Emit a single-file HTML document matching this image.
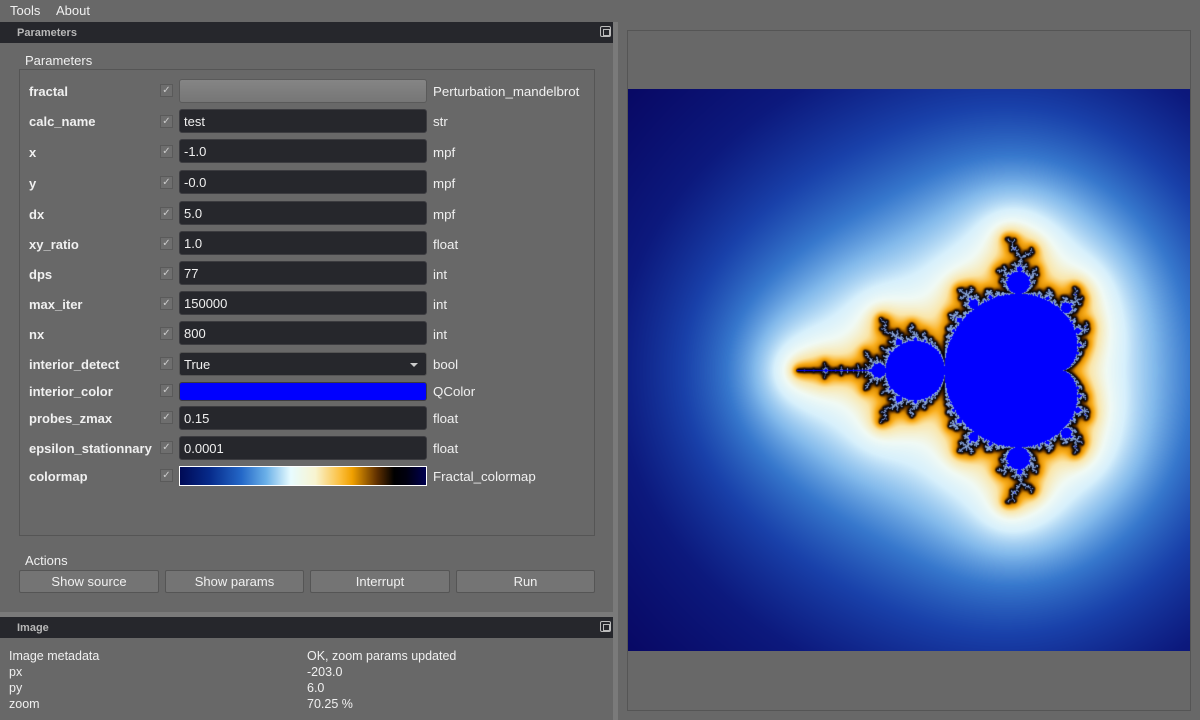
<!DOCTYPE html>
<html><head><meta charset="utf-8"><style>
*{box-sizing:border-box;margin:0;padding:0}
body{width:1200px;height:720px;background:#686868;font-family:"Liberation Sans","DejaVu Sans",sans-serif;font-size:13px;color:#f0f0f0;position:relative;overflow:hidden}
.a{position:absolute}
.menu span{position:absolute;top:3px;font-size:13px}
.dock{background:#26272c;height:21px;left:0;width:613px;color:#b8b8b8;font-weight:bold;font-size:11px;padding:5px 0 0 17px}
.fl{position:absolute;right:2px;top:4px;width:11px;height:11px;border:1px solid #bbb;border-radius:2px}
.fl:after{content:"";position:absolute;left:2px;top:2px;width:5px;height:5px;border:1px solid #bbb}
.lab{position:absolute;left:29px;font-weight:bold;font-size:13px}
.cb{position:absolute;left:160px;width:13px;height:13px;border:1px solid #5a5a5a;background:#6e6e6e;color:#ccc;font-size:10px;line-height:11px;text-align:center}
.fd{position:absolute;left:179px;width:248px;height:24px;background:#26272c;border:1px solid #3c3c40;border-radius:3px;padding:4px 0 0 4px;font-size:13px}
.ty{position:absolute;left:433px;font-size:13.3px}
.btn{position:absolute;top:570px;height:23px;background:#747474;border:1px solid #555;border-radius:2px;text-align:center;padding-top:3px;font-size:13px}
.md{position:absolute;font-size:12.5px}
</style></head><body>
<div class="menu"><span style="left:10px">Tools</span><span style="left:56px">About</span></div>
<div class="a dock" style="top:22px">Parameters<div class="fl"></div></div>
<div class="a" style="left:613px;top:22px;width:5px;height:698px;background:#7a7a7a"></div>
<div class="a" style="left:0;top:612px;width:613px;height:5px;background:#7a7a7a"></div>
<div class="a" style="left:25px;top:53px">Parameters</div>
<div class="a" style="left:19px;top:69px;width:576px;height:467px;border:1px solid #555"></div>

<div class="lab" style="top:84px">fractal</div><div class="cb" style="top:84px">✓</div>
<div class="fd" style="top:79px;background:linear-gradient(#858585,#767676);border-color:#5a5a5a"></div><div class="ty" style="top:84px">Perturbation_mandelbrot</div>

<div class="lab" style="top:114px">calc_name</div><div class="cb" style="top:115px">✓</div><div class="fd" style="top:109px">test</div><div class="ty" style="top:114px">str</div>
<div class="lab" style="top:145px">x</div><div class="cb" style="top:145px">✓</div><div class="fd" style="top:139px">-1.0</div><div class="ty" style="top:145px">mpf</div>
<div class="lab" style="top:176px">y</div><div class="cb" style="top:176px">✓</div><div class="fd" style="top:170px">-0.0</div><div class="ty" style="top:176px">mpf</div>
<div class="lab" style="top:207px">dx</div><div class="cb" style="top:207px">✓</div><div class="fd" style="top:201px">5.0</div><div class="ty" style="top:207px">mpf</div>
<div class="lab" style="top:237px">xy_ratio</div><div class="cb" style="top:237px">✓</div><div class="fd" style="top:231px">1.0</div><div class="ty" style="top:237px">float</div>
<div class="lab" style="top:267px">dps</div><div class="cb" style="top:267px">✓</div><div class="fd" style="top:261px">77</div><div class="ty" style="top:267px">int</div>
<div class="lab" style="top:297px">max_iter</div><div class="cb" style="top:297px">✓</div><div class="fd" style="top:291px">150000</div><div class="ty" style="top:297px">int</div>
<div class="lab" style="top:327px">nx</div><div class="cb" style="top:327px">✓</div><div class="fd" style="top:321px">800</div><div class="ty" style="top:327px">int</div>
<div class="lab" style="top:357px">interior_detect</div><div class="cb" style="top:357px">✓</div><div class="fd" style="top:352px;border-color:#555">True<span style="position:absolute;right:8px;top:10px;border-left:4px solid transparent;border-right:4px solid transparent;border-top:4px solid #ccc"></span></div><div class="ty" style="top:357px">bool</div>
<div class="lab" style="top:384px">interior_color</div><div class="cb" style="top:384px">✓</div><div class="fd" style="top:382px;height:19px;background:#0000ff"></div><div class="ty" style="top:384px">QColor</div>
<div class="lab" style="top:411px">probes_zmax</div><div class="cb" style="top:411px">✓</div><div class="fd" style="top:406px">0.15</div><div class="ty" style="top:411px">float</div>
<div class="lab" style="top:441px">epsilon_stationnary</div><div class="cb" style="top:441px">✓</div><div class="fd" style="top:436px">0.0001</div><div class="ty" style="top:441px">float</div>
<div class="lab" style="top:469px">colormap</div><div class="cb" style="top:469px">✓</div>
<div class="a" style="left:179px;top:466px;width:248px;height:20px;border:1px solid #fff;background:linear-gradient(90deg,#000a55 0%,#062a8a 12%,#2468c8 25%,#6ab0e8 35%,#e8fcff 45%,#f8f4d0 55%,#fcc040 65%,#f0a000 70%,#603000 80%,#000000 87%,#000010 92%,#000050 100%)"></div>
<div class="ty" style="top:469px">Fractal_colormap</div>

<div class="a" style="left:25px;top:553px">Actions</div>
<div class="btn" style="left:19px;width:140px">Show source</div>
<div class="btn" style="left:165px;width:139px">Show params</div>
<div class="btn" style="left:310px;width:140px">Interrupt</div>
<div class="btn" style="left:456px;width:139px">Run</div>

<div class="a dock" style="top:617px">Image<div class="fl"></div></div>
<div class="md" style="left:9px;top:649px">Image metadata</div><div class="md" style="left:307px;top:649px">OK, zoom params updated</div>
<div class="md" style="left:9px;top:665px">px</div><div class="md" style="left:307px;top:665px">-203.0</div>
<div class="md" style="left:9px;top:681px">py</div><div class="md" style="left:307px;top:681px">6.0</div>
<div class="md" style="left:9px;top:697px">zoom</div><div class="md" style="left:307px;top:697px">70.25 %</div>

<div class="a" style="left:627px;top:30px;width:564px;height:681px;border:1px solid #555"></div>
<div class="a" id="bg" style="left:628px;top:89px;width:562px;height:562px;background:radial-gradient(ellipse 320px 280px at 340px 270px,#0000ff 0,#0000ff 70px,#000 85px,#f0a000 100px,#fcf0c0 120px,#e8fcff 160px,#6ab0e8 230px,#2060c0 300px,#0a1470 450px)"></div>
<canvas id="c" width="562" height="562" class="a" style="left:628px;top:89px"></canvas>
<script>
(function(){
var cv=document.getElementById('c'),ctx=cv.getContext('2d'),W=562,H=562;
var img=ctx.createImageData(W,H),d=img.data;
var s=117.8,ox=1032.6-628,oy=370-89;
var stops=[[0,[140,170,220]],[0.5,[20,20,50]],[1.1,[0,0,0]],[1.7,[80,40,0]],[2.2,[220,140,0]],[2.7,[250,175,30]],[3.3,[250,230,170]],[4.0,[240,250,245]],[4.5,[215,240,252]],[5.1,[130,185,235]],[5.6,[55,120,205]],[6.1,[25,65,170]],[6.6,[12,25,125]],[7.1,[8,8,100]]];
function col(t){if(t<=stops[0][0])return stops[0][1];for(var i=1;i<stops.length;i++){if(t<=stops[i][0]){var a=stops[i-1],b=stops[i],f=(t-a[0])/(b[0]-a[0]);return [a[1][0]+(b[1][0]-a[1][0])*f,a[1][1]+(b[1][1]-a[1][1])*f,a[1][2]+(b[1][2]-a[1][2])*f];}}return stops[stops.length-1][1];}
for(var py=0;py<H;py++){var ci=(py-oy)/s;for(var px=0;px<W;px++){var cr=(px-ox)/s;var zr=0,zi=0,dr=0,di=0,n=0,M=600,r2=0;
for(;n<M;n++){var ndr=2*(zr*dr-zi*di)+1,ndi=2*(zr*di+zi*dr);dr=ndr;di=ndi;var t=zr*zr-zi*zi+cr;zi=2*zr*zi+ci;zr=t;r2=zr*zr+zi*zi;if(r2>1e12)break;}
var k=(py*W+px)*4,c;
if(n>=M){c=[0,0,255];}else{var m=Math.sqrt(r2),dd=2*m*Math.log(m)/Math.sqrt(dr*dr+di*di)*s;c=col(Math.log(1+dd));}
d[k]=c[0];d[k+1]=c[1];d[k+2]=c[2];d[k+3]=255;}}
ctx.putImageData(img,0,0);
})();
</script>
</body></html>
